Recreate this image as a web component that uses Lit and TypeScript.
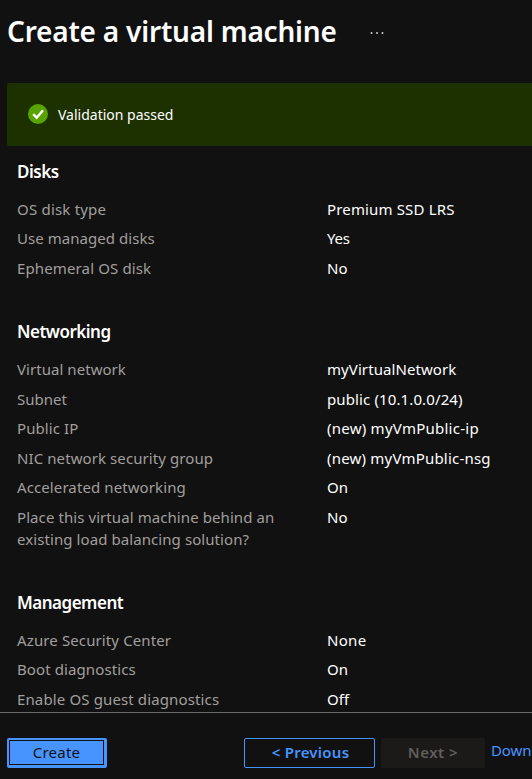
import { LitElement, html, css } from "lit";
import { styleMap } from "lit/directives/style-map.js";

type Cell = [text: string, tracking: number];
interface Section { title: Cell; rows: [Cell, Cell][]; }

const sections: Section[] = [
  {
    title: ["Disks", -0.5],
    rows: [
      [["OS disk type", 0.2], ["Premium SSD LRS", 0.15]],
      [["Use managed disks", 0.05], ["Yes", -0.2]],
      [["Ephemeral OS disk", 0.13], ["No", 0.1]],
    ],
  },
  {
    title: ["Networking", -0.5],
    rows: [
      [["Virtual network", 0.05], ["myVirtualNetwork", 0.08]],
      [["Subnet", 0], ["public (10.1.0.0/24)", 0.12]],
      [["Public IP", 0.1], ["(new) myVmPublic-ip", 0.25]],
      [["NIC network security group", 0.09], ["(new) myVmPublic-nsg", 0.2]],
      [["Accelerated networking", 0.1], ["On", 0]],
      [["Place this virtual machine behind an existing load balancing solution?", 0.08], ["No", 0.1]],
    ],
  },
  {
    title: ["Management", -0.5],
    rows: [
      [["Azure Security Center", 0.12], ["None", 0.3]],
      [["Boot diagnostics", 0.1], ["On", 0]],
      [["Enable OS guest diagnostics", 0.13], ["Off", 0]],
    ],
  },
];

const cell = (kind: string, [text, tracking]: Cell) =>
  html`<div class=${kind} style=${styleMap({ letterSpacing: `${tracking}px` })}>${text}</div>`;

class AppRoot extends LitElement {
  static styles = css`
    :host {
      display: flex;
      flex-direction: column;
      height: 779px;
      overflow: hidden;
      background: #111;
      color: #fff;
      font: 400 15px/22px "Noto Sans", "Open Sans", sans-serif;
    }
    * { box-sizing: border-box; }
    header {
      display: flex;
      flex: none;
      align-items: center;
      height: 83px;
      padding: 0 0 21px 7px;
      gap: 33px;
    }
    h1 {
      margin: 0;
      font-size: 28px;
      line-height: 38px;
      font-weight: 600;
      letter-spacing: -0.2px;
      white-space: nowrap;
    }
    .dots { width: 14px; height: 2px; margin-top: 4px; fill: #ddd; }
    .banner {
      display: flex;
      flex: none;
      align-items: flex-start;
      height: 63px;
      margin-left: 7px;
      padding: 21px 0 0 21px;
      gap: 10px;
      border-radius: 2px 0 0 2px;
      background: #1c3000;
      font-size: 14px;
    }
    .check { width: 20px; height: 20px; }
    main {
      display: flex;
      flex: 1;
      min-height: 0;
      flex-direction: column;
      gap: 41.66px;
      padding: 14.4px 17px 0;
      overflow: hidden;
    }
    section { display: flex; flex: none; flex-direction: column; gap: 7.5px; }
    .heading {
      padding-top: 0.5px;
      margin-bottom: 7.5px;
      font-size: 17px;
      font-weight: 600;
    }
    .row { display: grid; grid-template-columns: 270px 1fr; column-gap: 40px; }
    .label { color: #a19f9d; }
    .value { white-space: nowrap; }
    footer {
      display: flex;
      flex: none;
      align-items: flex-start;
      height: 67px;
      padding: 25px 0 0 7px;
      border-top: 1px solid #6b6968;
      overflow: hidden;
      white-space: nowrap;
    }
    button {
      flex: none;
      height: 30px;
      padding: 0 0 2px;
      border: 0;
      border-radius: 2px;
      font: inherit;
      line-height: 26px;
    }
    .create {
      display: flex;
      width: 100px;
      padding: 2px 3px 3px 2px;
      margin-right: 137px;
      background: #4894fe;
      color: #111;
    }
    .focus {
      flex: 1;
      height: 25px;
      border: 1px solid #111;
      line-height: 22px;
      letter-spacing: 0.25px;
    }
    .previous {
      width: 131px;
      margin-right: 6px;
      padding-left: 2px;
      border: 1px solid #4894fe;
      background: #111;
      color: #4894fe;
      font-weight: 600;
      letter-spacing: 0.25px;
    }
    .next {
      width: 104px;
      margin-right: 6px;
      background: #1b1a19;
      color: #605e5c;
      font-weight: 600;
      letter-spacing: 0.5px;
    }
    .download { color: #4894fe; line-height: 24px; letter-spacing: -0.1px; }
  `;

  render() {
    return html`
      <header>
        <h1>Create a virtual machine</h1>
        <svg class="dots" viewBox="0 0 14 2">
          <circle cx="1.5" cy="1" r="0.9" /><circle cx="7" cy="1" r="0.9" /><circle cx="12.5" cy="1" r="0.9" />
        </svg>
      </header>
      <div class="banner">
        <svg class="check" viewBox="0 0 20 20">
          <circle cx="10" cy="10" r="10" fill="#57a300" />
          <path d="M5.2 10.2 8.7 13.7 15 6.3" fill="none" stroke="#fff" stroke-width="2.4" />
        </svg>
        <span>Validation passed</span>
      </div>
      <main>
        ${sections.map(
          (s) => html`<section>
            ${cell("heading", s.title)}
            ${s.rows.map(([label, value]) => html`<div class="row">${cell("label", label)}${cell("value", value)}</div>`)}
          </section>`
        )}
      </main>
      <footer>
        <button class="create"><span class="focus">Create</span></button>
        <button class="previous">&lt; Previous</button>
        <button class="next">Next &gt;</button>
        <span class="download">Down</span>
      </footer>
    `;
  }
}
customElements.define("app-root", AppRoot);
